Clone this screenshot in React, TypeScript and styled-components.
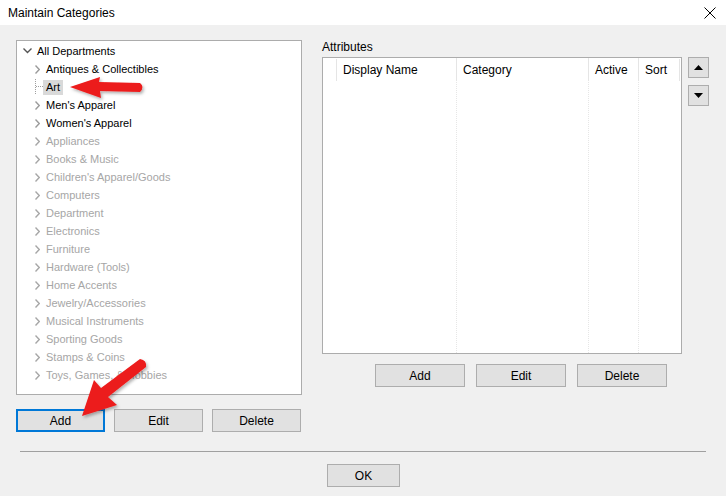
import React from "react";
import styled, { createGlobalStyle, css } from "styled-components";

const GlobalStyle = createGlobalStyle`
  html, body { margin: 0; padding: 0; background: #f0f0f0; }
  body { font-family: "Liberation Sans", Arial, sans-serif; font-size: 11px; color: #000; }
  * { box-sizing: border-box; }
`;

const Window = styled.div`
  position: relative;
  width: 726px;
  height: 496px;
  background: #f0f0f0;
  display: flex;
  flex-direction: column;
  overflow: hidden;
`;

const TitleBar = styled.div`
  height: 25px;
  background: #ffffff;
  display: flex;
  align-items: center;
  justify-content: space-between;
  padding: 0 8px 0 8px;
  font-size: 12px;
`;

const CloseBox = styled.div`
  width: 14px;
  height: 14px;
  margin-right: 1px;
  display: flex;
  align-items: center;
  justify-content: center;
`;

const Main = styled.div`
  display: flex;
  padding: 15px 0 0 16px;
  gap: 20px;
`;

const LeftColumn = styled.div`
  width: 286px;
  display: flex;
  flex-direction: column;
  gap: 14px;
`;

const TreeBox = styled.div`
  height: 355px;
  background: #fff;
  border: 1px solid #acacac;
  display: flex;
  flex-direction: column;
`;

const TreeRow = styled.div<{ $level: number; $disabled?: boolean }>`
  height: 18px;
  padding-top: 2px;
  display: flex;
  align-items: center;
  padding-left: ${(p) => (p.$level === 0 ? 5 : 16)}px;
  color: ${(p) => (p.$disabled ? "#a6a6a6" : "#000")};
  white-space: nowrap;
`;

const Expander = styled.span<{ $w: number }>`
  width: ${(p) => p.$w}px;
  height: 16px;
  display: flex;
  align-items: center;
  justify-content: center;
  flex-shrink: 0;
`;

const Guide = styled.span`
  position: relative;
  width: 6px;
  height: 16px;
  flex-shrink: 0;
  margin-left: 2px;
  &::before {
    content: "";
    position: absolute;
    left: 0;
    top: 0;
    height: 15px;
    border-left: 1px dotted #a0a0a0;
  }
  &::after {
    content: "";
    position: absolute;
    left: 1px;
    top: 7px;
    width: 7px;
    border-top: 1px dotted #a0a0a0;
  }
`;

const Label = styled.span<{ $selected?: boolean }>`
  margin-left: 2px;
  padding: 1px 3px 2px 2px;
  ${(p) =>
    p.$selected &&
    css`
      background: #d9d9d9;
      padding-left: 3px;
    `}
`;

const ButtonRow = styled.div<{ $pad?: number; $gap: number }>`
  display: flex;
  gap: ${(p) => p.$gap}px;
  padding-left: ${(p) => p.$pad ?? 0}px;
`;

const Button = styled.button<{ $w: number; $focused?: boolean }>`
  width: ${(p) => p.$w}px;
  height: 23px;
  background: #e1e1e1;
  border: 1px solid #adadad;
  font-family: inherit;
  font-size: 12px;
  color: #000;
  padding: 0;
  border-radius: 0;
  ${(p) =>
    p.$focused &&
    css`
      border: 2px solid #0078d7;
    `}
`;

const RightColumn = styled.div`
  display: flex;
  flex-direction: column;
`;

const SectionLabel = styled.div`
  height: 17px;
  font-size: 12px;
  line-height: 13px;
  padding-top: 1px;
`;

const GridRow = styled.div`
  display: flex;
  gap: 6px;
`;

const Grid = styled.div`
  width: 360px;
  height: 297px;
  background: #fff;
  border: 1px solid #acacac;
  display: flex;
`;

const Column = styled.div<{ $w: number; $last?: boolean }>`
  width: ${(p) => p.$w}px;
  display: flex;
  flex-direction: column;
  flex-shrink: 0;
  ${(p) =>
    !p.$last &&
    css`
      background-image: linear-gradient(#e6e6e6 50%, transparent 50%);
      background-size: 1px 2px;
      background-repeat: repeat-y;
      background-position: right top;
    `}
`;

const HeaderCell = styled.div<{ $sep?: boolean }>`
  height: 22px;
  display: flex;
  align-items: center;
  padding-left: 6px;
  font-size: 12px;
  background: #fff;
  border-right: ${(p) => (p.$sep ? "1px solid #e5e5e5" : "none")};
  margin-top: 1px;
`;

const SideButtons = styled.div`
  display: flex;
  flex-direction: column;
  gap: 7px;
`;

const ArrowButton = styled.button`
  width: 21px;
  height: 21px;
  background: #e1e1e1;
  border: 1px solid #adadad;
  padding: 0;
  display: flex;
  align-items: center;
  justify-content: center;
`;

const Separator = styled.div`
  height: 1px;
  background: #a0a0a0;
  margin: 19px 20px 0 20px;
`;

const Footer = styled.div`
  padding: 12px 0 0 327px;
`;

const Overlay = styled.svg`
  position: absolute;
  left: 0;
  top: 0;
  pointer-events: none;
`;

const enabled = ["Antiques & Collectibles", "Art", "Men's Apparel", "Women's Apparel"];
const disabled = [
  "Appliances",
  "Books & Music",
  "Children's Apparel/Goods",
  "Computers",
  "Department",
  "Electronics",
  "Furniture",
  "Hardware (Tools)",
  "Home Accents",
  "Jewelry/Accessories",
  "Musical Instruments",
  "Sporting Goods",
  "Stamps & Coins",
  "Toys, Games, & Hobbies",
];

const Chevron: React.FC<{ down?: boolean; color: string }> = ({ down, color }) =>
  down ? (
    <svg width="9" height="6" viewBox="0 0 9 6">
      <polyline points="0.5,0.5 4.5,4.5 8.5,0.5" fill="none" stroke={color} strokeWidth="1.4" />
    </svg>
  ) : (
    <svg width="5" height="9" viewBox="0 0 5 9">
      <polyline points="0.5,0.5 4.3,4.5 0.5,8.5" fill="none" stroke={color} strokeWidth="1.4" />
    </svg>
  );

export default function App() {
  return (
    <>
      <GlobalStyle />
      <Window>
        <TitleBar>
          <span>Maintain Categories</span>
          <CloseBox>
            <svg width="12" height="12" viewBox="0 0 12 12">
              <path d="M0.5 0.5 L11.5 11.5 M11.5 0.5 L0.5 11.5" stroke="#000" strokeWidth="1" />
            </svg>
          </CloseBox>
        </TitleBar>
        <Main>
          <LeftColumn>
            <TreeBox>
              <TreeRow $level={0}>
                <Expander $w={11}>
                  <Chevron down color="#555" />
                </Expander>
                <Label>All Departments</Label>
              </TreeRow>
              {enabled.map((name) => (
                <TreeRow key={name} $level={1}>
                  {name === "Art" ? (
                    <Guide />
                  ) : (
                    <Expander $w={9}>
                      <Chevron color="#9a9a9a" />
                    </Expander>
                  )}
                  <Label $selected={name === "Art"}>{name}</Label>
                </TreeRow>
              ))}
              {disabled.map((name) => (
                <TreeRow key={name} $level={1} $disabled>
                  <Expander $w={9}>
                    <Chevron color="#a6a6a6" />
                  </Expander>
                  <Label>{name}</Label>
                </TreeRow>
              ))}
            </TreeBox>
            <ButtonRow $gap={9}>
              <Button $w={89} $focused>Add</Button>
              <Button $w={89}>Edit</Button>
              <Button $w={89}>Delete</Button>
            </ButtonRow>
          </LeftColumn>
          <RightColumn>
            <SectionLabel>Attributes</SectionLabel>
            <GridRow>
              <Grid>
                <Column $w={14} $last>
                  <HeaderCell $sep />
                </Column>
                <Column $w={120}>
                  <HeaderCell $sep>Display Name</HeaderCell>
                </Column>
                <Column $w={132}>
                  <HeaderCell $sep>Category</HeaderCell>
                </Column>
                <Column $w={50}>
                  <HeaderCell $sep>Active</HeaderCell>
                </Column>
                <Column $w={41} $last>
                  <HeaderCell $sep>Sort</HeaderCell>
                </Column>
              </Grid>
              <SideButtons>
                <ArrowButton>
                  <svg width="9" height="5" viewBox="0 0 9 5">
                    <polygon points="0,5 4.5,0 9,5" fill="#000" />
                  </svg>
                </ArrowButton>
                <ArrowButton>
                  <svg width="9" height="5" viewBox="0 0 9 5">
                    <polygon points="0,0 4.5,5 9,0" fill="#000" />
                  </svg>
                </ArrowButton>
              </SideButtons>
            </GridRow>
            <ButtonRow $pad={53} $gap={11} style={{ marginTop: 10 }}>
              <Button $w={90}>Add</Button>
              <Button $w={90}>Edit</Button>
              <Button $w={90}>Delete</Button>
            </ButtonRow>
          </RightColumn>
        </Main>
        <Separator />
        <Footer>
          <Button $w={73}>OK</Button>
        </Footer>
        <Overlay width="726" height="496" viewBox="0 0 726 496">
          <defs>
            <filter id="sh" x="-20%" y="-40%" width="140%" height="180%">
              <feDropShadow dx="1.5" dy="2" stdDeviation="1.5" floodColor="#000" floodOpacity="0.3" />
            </filter>
          </defs>
          <path
            d="M70 87 L100 77 L99 82 L140 83 Q145 87 140 92 L100 91 L101 98 Z"
            fill="#ec1c1c"
            filter="url(#sh)"
          />
          <path
            d="M82 416 L94 380 L101 388 L140 359 Q147 360 146 367 L108 397 L117 405 Z"
            fill="#ec1c1c"
            filter="url(#sh)"
          />
        </Overlay>
      </Window>
    </>
  );
}
